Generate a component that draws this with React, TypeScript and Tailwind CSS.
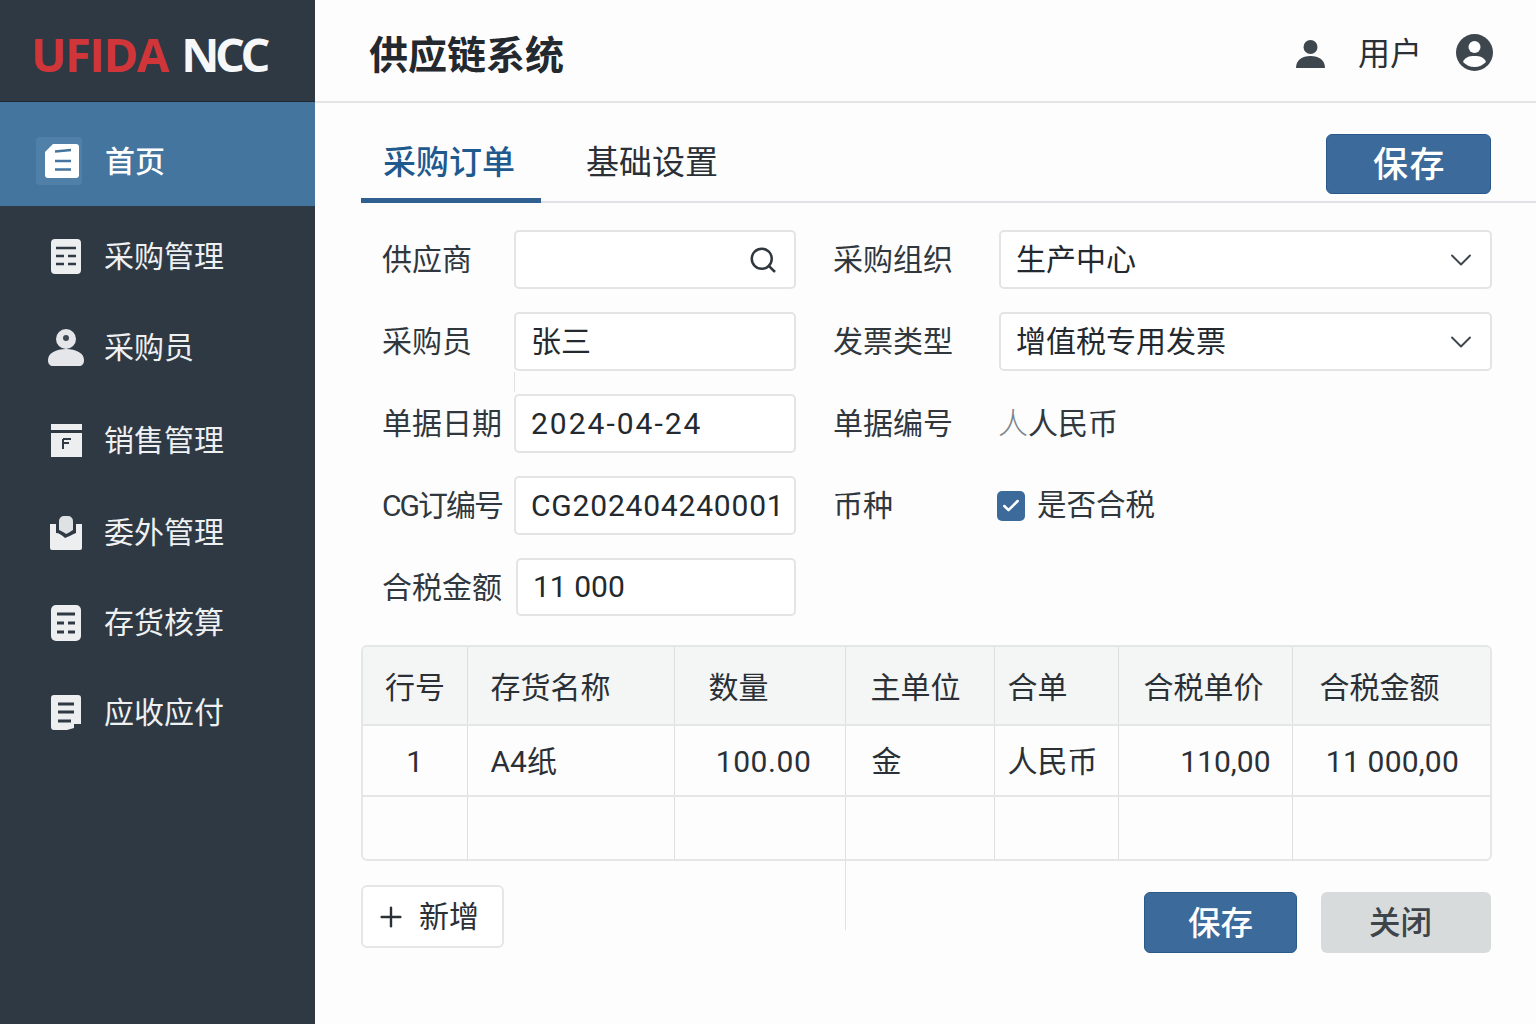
import { ChevronDown, Search, Plus, Check } from "lucide-react";

// Sidebar icons, drawn to match the reference
const HomeIcon = () => (
  <svg width="34" height="34" viewBox="0 0 34 34">
    <path d="M8 0H31a3 3 0 0 1 3 3V31a3 3 0 0 1-3 3H3a3 3 0 0 1-3-3V8Z" fill="#fff" />
    <path d="M10 7.500L26 6M10 17H26M10 25.500H26" stroke="#44759f" strokeWidth="2.500" fill="none" />
  </svg>
);

const TableIcon = () => (
  <svg width="30" height="35" viewBox="0 0 30 35">
    <rect width="30" height="35" rx="4" fill="#eceef0" />
    <path d="M5 9H25M5 17H13M17 17H25M5 25H13M17 25H25" stroke="#2f3943" strokeWidth="2.500" />
  </svg>
);

const PersonIcon = () => (
  <svg width="36" height="37" viewBox="0 0 36 37">
    <circle cx="18" cy="10" r="10" fill="#e4e6e9" />
    <circle cx="18" cy="9" r="3" fill="#3f4954" />
    <path d="M0 31C0 24 8 20 18 20S36 24 36 31C36 35 34 37 31 37H5C2 37 0 35 0 31Z" fill="#e4e6e9" />
  </svg>
);

const SalesIcon = () => (
  <svg width="31" height="33" viewBox="0 0 31 33">
    <rect width="31" height="6" fill="#eceef0" />
    <rect y="9" width="31" height="24" fill="#eceef0" />
    <path d="M12 15V25M12 15H20M12 19H18" stroke="#2f3943" strokeWidth="2" fill="none" />
  </svg>
);

const OutsourceIcon = () => (
  <svg width="32" height="34" viewBox="0 0 32 34">
    <path d="M0 8H6V17C9 17 12 19 15 22C18 21 21 19 26 17V8H32V32a2 2 0 0 1-2 2H2a2 2 0 0 1-2-2Z" fill="#eceef0" />
    <path d="M9 5a5 5 0 0 1 5-5H18a5 5 0 0 1 5 5V14C20 16 18 17 16 18C14 16 11 15 9 14Z" fill="#dfe2e5" />
  </svg>
);

const StockIcon = () => (
  <svg width="30" height="36" viewBox="0 0 30 36">
    <rect width="30" height="36" rx="5" fill="#eceef0" />
    <path d="M6 9H24M6 18H13M17 18H24M6 27H13M17 27H24" stroke="#2f3943" strokeWidth="3" />
  </svg>
);

const BillIcon = () => (
  <svg width="30" height="35" viewBox="0 0 30 35">
    <path d="M3 0H27a3 3 0 0 1 3 3V29H23V33L16 35H3a3 3 0 0 1-3-3V3a3 3 0 0 1 3-3Z" fill="#eceef0" />
    <path d="M7 9H23M7 17H23M7 26H20" stroke="#2f3943" strokeWidth="3" />
  </svg>
);

const navItems = [
  { label: "采购管理", icon: <TableIcon />, offset: "" },
  { label: "采购员", icon: <PersonIcon />, offset: "" },
  { label: "销售管理", icon: <SalesIcon />, offset: "mt-[2px]" },
  { label: "委外管理", icon: <OutsourceIcon />, offset: "mt-[1px]" },
  { label: "存货核算", icon: <StockIcon />, offset: "-mt-[1px]" },
  { label: "应收应付", icon: <BillIcon />, offset: "-mt-[1px]" },
];

const Sidebar = () => (
  <aside className="w-[315px] shrink-0 bg-[#2f3943] text-[#eef0f2]">
    <div className="h-[102px] pl-[31px] pt-[26px] border-b border-[#1f2730] text-[47px] leading-[56px] font-bold tracking-[-1.500px] font-['Open_Sans',sans-serif]">
      <span className="text-[#d0353a]">UFIDA</span>{" "}
      <span className="ml-[3px] tracking-[-4.500px] text-[#f6f7f9]">NCC</span>
    </div>
    <div className="h-[104px] bg-[#44759f] flex items-center pl-[36px] pt-[14px]">
      <div className="w-[46px] h-[48px] rounded-[4px] bg-[#5080a8] flex items-center justify-center pl-[6px]">
        <HomeIcon />
      </div>
      <span className="ml-[23px] text-[30px] font-medium text-white">首页</span>
    </div>
    <nav className="pt-[5px]">
      {navItems.map((item) => (
        <div key={item.label} className={`h-[91px] flex items-center ${item.offset}`}>
          <div className="w-[104px] pl-[48px] pr-[20px] flex justify-center">{item.icon}</div>
          <span className="text-[30px]">{item.label}</span>
        </div>
      ))}
    </nav>
  </aside>
);

const Header = () => (
  <header className="h-[103px] shrink-0 border-b-2 border-[#e2e4e6] flex items-center pl-[54px] pr-[43px]">
    <h1 className="text-[39px] font-semibold text-[#23292e] mt-[11px]">供应链系统</h1>
    <div className="ml-auto flex items-center mt-[4px]">
      <svg className="mt-[2px]" width="29" height="28" viewBox="0 0 29 28">
        <circle cx="14.500" cy="7" r="7" fill="#3f474e" />
        <path d="M0 28C0 20 6 16 14.500 16S29 20 29 28Z" fill="#3f474e" />
      </svg>
      <span className="ml-[33px] text-[32px] text-[#2a3036] mt-[2px]">用户</span>
      <svg className="ml-[34px]" width="37" height="37" viewBox="0 0 37 37">
        <circle cx="18.500" cy="18.500" r="18.500" fill="#3f474e" />
        <circle cx="18.500" cy="13" r="6" fill="#fff" />
        <path d="M7 28C9 23 13 22 18.500 22S28 23 30 28C27 31 23 33 18.500 33S10 31 7 28Z" fill="#fff" />
      </svg>
    </div>
  </header>
);

const Tabs = () => (
  <div className="ml-[46px] h-[100px] border-b-2 border-[#dfe1e4] flex items-start shrink-0 relative">
    <div className="w-[180px] h-[100px] border-b-[5px] border-[#2f6090] -mb-[2px] pr-[4px] text-center text-[33px] leading-[120px] font-medium text-[#1f5a8e]">
      采购订单
    </div>
    <div className="ml-[45px] text-[33px] leading-[120px] text-[#2a3036]">基础设置</div>
    <button className="ml-auto mr-[45px] mt-[31px] w-[165px] h-[60px] pt-[5px] pl-[2px] rounded-[6px] bg-[#3b6a9b] border border-[#2a5a8a] text-[35px] font-medium tracking-[1.500px] text-white">
      保存
    </button>
  </div>
);

const inputClass =
  "h-[59px] w-full rounded-[5px] border-2 border-[#e2e4e6] bg-white flex items-center pl-[15px] text-[30px] text-[#23292e]";
const labelClass = "text-[30px] text-[#30373d] whitespace-nowrap";

const SelectBox = ({ value }: { value: string }) => (
  <div className={inputClass + " justify-between pr-[11px]"}>
    <span>{value}</span>
    <ChevronDown className="w-[36px] h-[36px] text-[#3f474e]" strokeWidth={1.300} />
  </div>
);

const Form = () => (
  <div className="ml-[67px] mt-[27px] grid grid-cols-[132px_282px_37px_166px_493px] auto-rows-[59px] gap-y-[23px] items-center shrink-0">
    <span className={labelClass}>供应商</span>
    <div className={inputClass + " justify-end pr-[16px]"}>
      <Search className="w-[30px] h-[30px] text-[#30373d]" strokeWidth={2} />
    </div>
    <span />
    <span className={labelClass}>采购组织</span>
    <SelectBox value="生产中心" />

    <span className={labelClass}>采购员</span>
    <div className={inputClass}>张三</div>
    <span />
    <span className={labelClass}>发票类型</span>
    <SelectBox value="增值税专用发票" />

    <span className={labelClass}>单据日期</span>
    <div className={inputClass + " tracking-[2px]"}>2024-04-24</div>
    <span />
    <span className={labelClass}>单据编号</span>
    <span className={labelClass + " -ml-[1px]"}>
      <span className="text-[#7d848a] font-light">人</span>人民币
    </span>

    <span className={labelClass + " tracking-[-2px]"}>CG订编号</span>
    <div className={inputClass + " tracking-[0.800px]"}>CG202404240001</div>
    <span />
    <span className={labelClass}>币种</span>
    <div className="flex items-center -ml-[2px]">
      <span className="w-[28px] h-[30px] rounded-[5px] bg-[#3b6a9b] flex items-center justify-center">
        <Check className="w-[20px] h-[20px] text-white" strokeWidth={3} />
      </span>
      <span className="ml-[12px] text-[29.500px] text-[#30373d] whitespace-nowrap">是否合税</span>
    </div>

    <span className={labelClass}>合税金额</span>
    <div className={inputClass + " !h-[58px] !w-[280px] justify-self-end -mt-[2px]"}>11 000</div>
  </div>
);

const headCols = [
  { label: "行号", width: "w-[104px]", pad: "pl-[22px]" },
  { label: "存货名称", width: "w-[207px]", pad: "pl-[23px]" },
  { label: "数量", width: "w-[171px]", pad: "pl-[34px]" },
  { label: "主单位", width: "w-[149px]", pad: "pl-[25px]" },
  { label: "合单", width: "w-[124px]", pad: "pl-[13px]" },
  { label: "合税单价", width: "w-[174px]", pad: "pl-[25px]" },
  { label: "合税金额", width: "w-[202px]", pad: "pl-[27px]" },
];

const DataTable = () => (
  <div className="ml-[46px] mr-[44px] mt-[28px] border-2 border-[#e4e6e8] rounded-[6px] overflow-hidden shrink-0">
    <table className="w-full table-fixed border-collapse text-[30px] text-[#2a3036]">
      <thead>
        <tr className="h-[78px] bg-[#f4f5f5] border-b-2 border-[#e4e6e8]">
          {headCols.map((c) => (
            <th
              key={c.label}
              className={`${c.width} ${c.pad} pt-[3px] font-normal text-left border-r border-[#dcdee0] last:border-r-0`}
            >
              {c.label}
            </th>
          ))}
        </tr>
      </thead>
      <tbody>
        <tr className="h-[71px] border-b-2 border-[#e4e6e8]">
          <td className="pt-[2px] text-center border-r border-[#dcdee0]">1</td>
          <td className="pt-[2px] pl-[23px] border-r border-[#dcdee0]">A4纸</td>
          <td className="pt-[2px] text-right pr-[33px] tracking-[0.600px] border-r border-[#dcdee0]">100.00</td>
          <td className="pt-[2px] pl-[26px] border-r border-[#dcdee0]">金</td>
          <td className="pt-[2px] pl-[13px] border-r border-[#dcdee0]">人民币</td>
          <td className="pt-[2px] text-right pr-[21px] border-r border-[#dcdee0]">110,00</td>
          <td className="pt-[2px] text-right pr-[35px] tracking-[0.200px]">11 000,00</td>
        </tr>
        <tr className="h-[63px]">
          {headCols.map((c) => (
            <td key={c.label} className="border-r border-[#dcdee0] last:border-r-0" />
          ))}
        </tr>
      </tbody>
    </table>
  </div>
);

const Footer = () => (
  <div className="ml-[46px] mr-[45px] mt-[24px] flex items-start shrink-0">
    <button className="w-[143px] h-[63px] rounded-[6px] border-2 border-[#e4e6e8] bg-white flex items-center pl-[12px] text-[30px] text-[#2a3036]">
      <Plus className="w-[32px] h-[32px] mr-[12px]" strokeWidth={1.800} />
      新增
    </button>
    <button className="ml-auto mt-[7px] w-[153px] h-[61px] pt-[4px] rounded-[6px] bg-[#3b6a9b] border border-[#2a5a8a] text-[32.500px] font-medium text-white">
      保存
    </button>
    <button className="ml-[24px] mt-[7px] w-[170px] h-[61px] pr-[11px] pt-[2px] rounded-[6px] bg-[#d8dbdc] text-[31.500px] font-medium text-[#3d444a]">
      关闭
    </button>
  </div>
);

export default function App() {
  return (
    <div className="flex h-[1024px] w-[1536px] overflow-hidden bg-[#fdfdfd] font-['Roboto','Noto_Sans_CJK_SC',sans-serif]">
      <Sidebar />
      <main className="flex-1 flex flex-col min-w-0 relative">
        <Header />
        <Tabs />
        <Form />
        <DataTable />
        <Footer />
        {/* faint stray rules that show in the picture below the table */}
        <div className="absolute left-[530px] top-[860px] w-[1px] h-[70px] bg-[#dfe1e3]" />
        <div className="absolute left-[199px] top-[372px] w-[1px] h-[20px] bg-[#dfe1e3]" />
      </main>
    </div>
  );
}
